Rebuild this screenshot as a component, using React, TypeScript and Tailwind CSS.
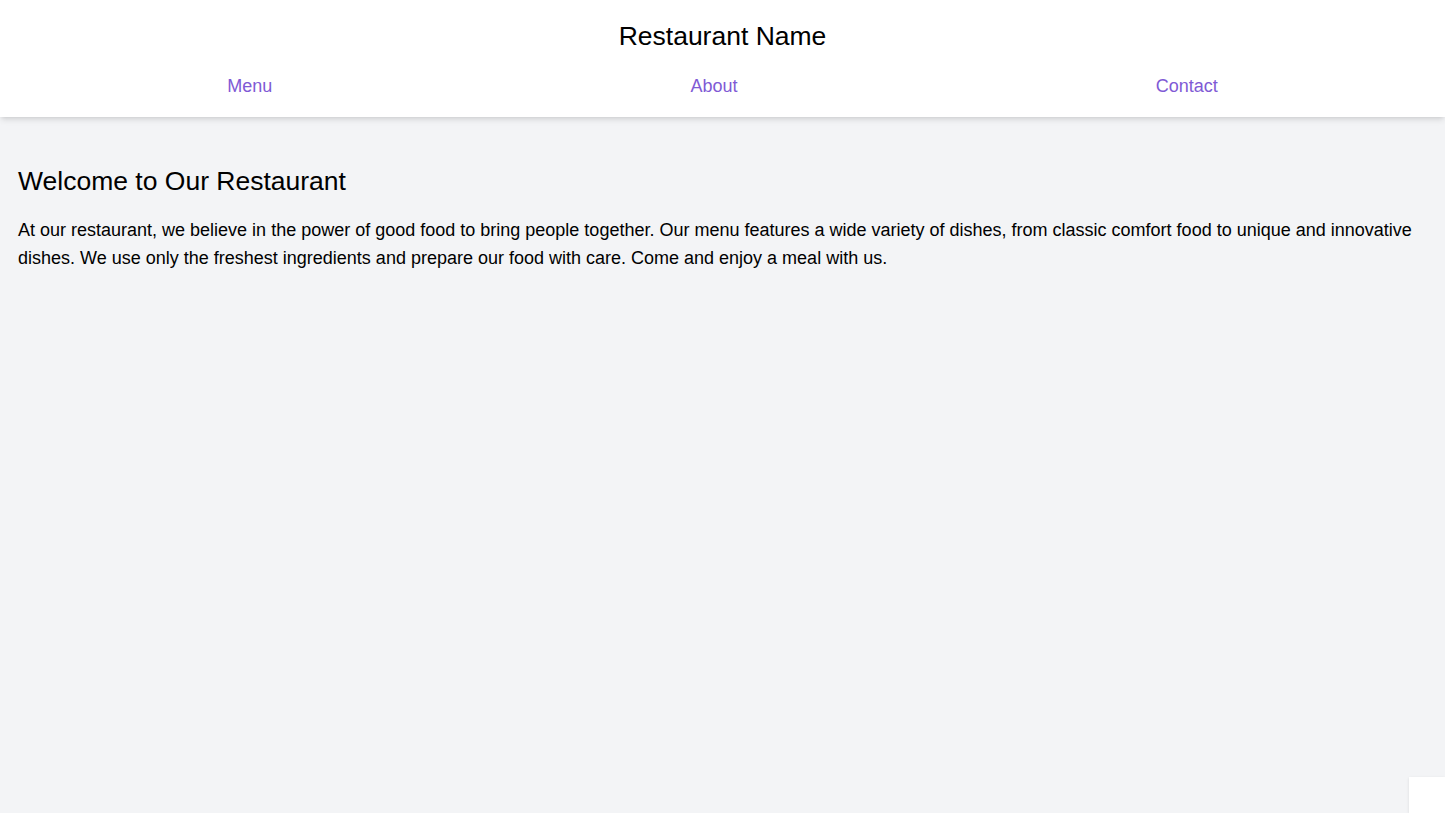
import React from 'react';

const links = ['Menu', 'About', 'Contact'];

const App: React.FC = () => {
  return (
    <div className="min-h-screen bg-[#f3f4f6] font-['Liberation_Sans',Arial,sans-serif]">
      <header className="bg-white shadow-md">
        <div className="px-[18px] pt-5 pb-[17px]">
          <h1 className="text-[26.5px] text-center text-black leading-8">Restaurant Name</h1>
          <nav className="flex justify-around mt-5">
            {links.map((l) => (
              <a key={l} href="#" className="text-lg leading-7 text-[#805ad5]">
                {l}
              </a>
            ))}
          </nav>
        </div>
      </header>

      <main className="px-[18px] py-12">
        <h2 className="text-[26.5px] leading-8 text-black mb-[19px]">Welcome to Our Restaurant</h2>
        <p className="text-lg leading-7 text-black">
          At our restaurant, we believe in the power of good food to bring people together. Our menu features a wide
          variety of dishes, from classic comfort food to unique and innovative dishes. We use only the freshest
          ingredients and prepare our food with care. Come and enjoy a meal with us.
        </p>
      </main>

      <div className="fixed bottom-0 right-0 w-9 h-9 bg-white shadow-sm"></div>
    </div>
  );
};

export default App;
